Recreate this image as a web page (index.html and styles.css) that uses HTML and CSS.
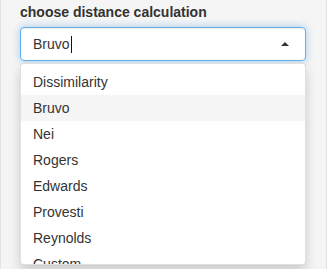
FILE: index.html
```html
<html>
  <head>
    <title>choose distance calculation</title>
    <link rel="stylesheet" href="styles.css">
  </head>
  <body>
    <div class="well">
      <label class="control-label">choose distance calculation</label>
      <div class="selectize-control">
        <div class="selectize-input focus">
          <span class="item">Bruvo</span><span class="cursor"></span>
          <span class="arrow"></span>
        </div>
        <div class="selectize-dropdown">
          <div class="dropdown-content">
            <div class="option">Dissimilarity</div>
            <div class="option active">Bruvo</div>
            <div class="option">Nei</div>
            <div class="option">Rogers</div>
            <div class="option">Edwards</div>
            <div class="option">Provesti</div>
            <div class="option">Reynolds</div>
            <div class="option">Custom</div>
          </div>
        </div>
      </div>
    </div>
  </body>
</html>
```
FILE: styles.css
```css
body {
  margin: 0;
  background: #fff;
  font-family: "Liberation Sans", Arial, sans-serif;
  font-size: 14px;
  line-height: 20px;
  color: #333;
  overflow: hidden;
}
.well {
  width: 287px;
  height: 248px;
  padding: 2px 19px 19px 19px;
  background: #f5f5f5;
  border: 1px solid #e3e3e3;
  border-top: none;
}
.control-label {
  display: block;
  font-weight: bold;
  margin-bottom: 5px;
}
.selectize-control {
  position: relative;
  width: 286px;
}
.selectize-input {
  display: flex;
  align-items: center;
  height: 34px;
  box-sizing: border-box;
  padding: 6px 12px;
  background: #fff;
  border: 1px solid #66afe9;
  border-radius: 4px;
  box-shadow: inset 0 1px 1px rgba(0, 0, 0, 0.075), 0 0 8px rgba(102, 175, 233, 0.6);
}
.cursor {
  width: 1px;
  height: 17px;
  margin-left: 1px;
  background: #111;
}
.arrow {
  margin-left: auto;
  margin-right: 4px;
  width: 0;
  height: 0;
  border-style: solid;
  border-width: 0 4px 4px 4px;
  border-color: transparent transparent #333 transparent;
}
.selectize-dropdown {
  position: absolute;
  top: 36px;
  left: 0;
  right: 0;
  background: #fff;
  border: 1px solid rgba(0, 0, 0, 0.12);
  border-radius: 4px;
  box-shadow: 0 6px 12px rgba(0, 0, 0, 0.175);
}
.dropdown-content {
  max-height: 200px;
  box-sizing: border-box;
  padding: 5px 0;
  overflow: hidden;
}
.option {
  padding: 3px 12px;
  height: 20px;
}
.option.active {
  background: #f5f5f5;
}
```
